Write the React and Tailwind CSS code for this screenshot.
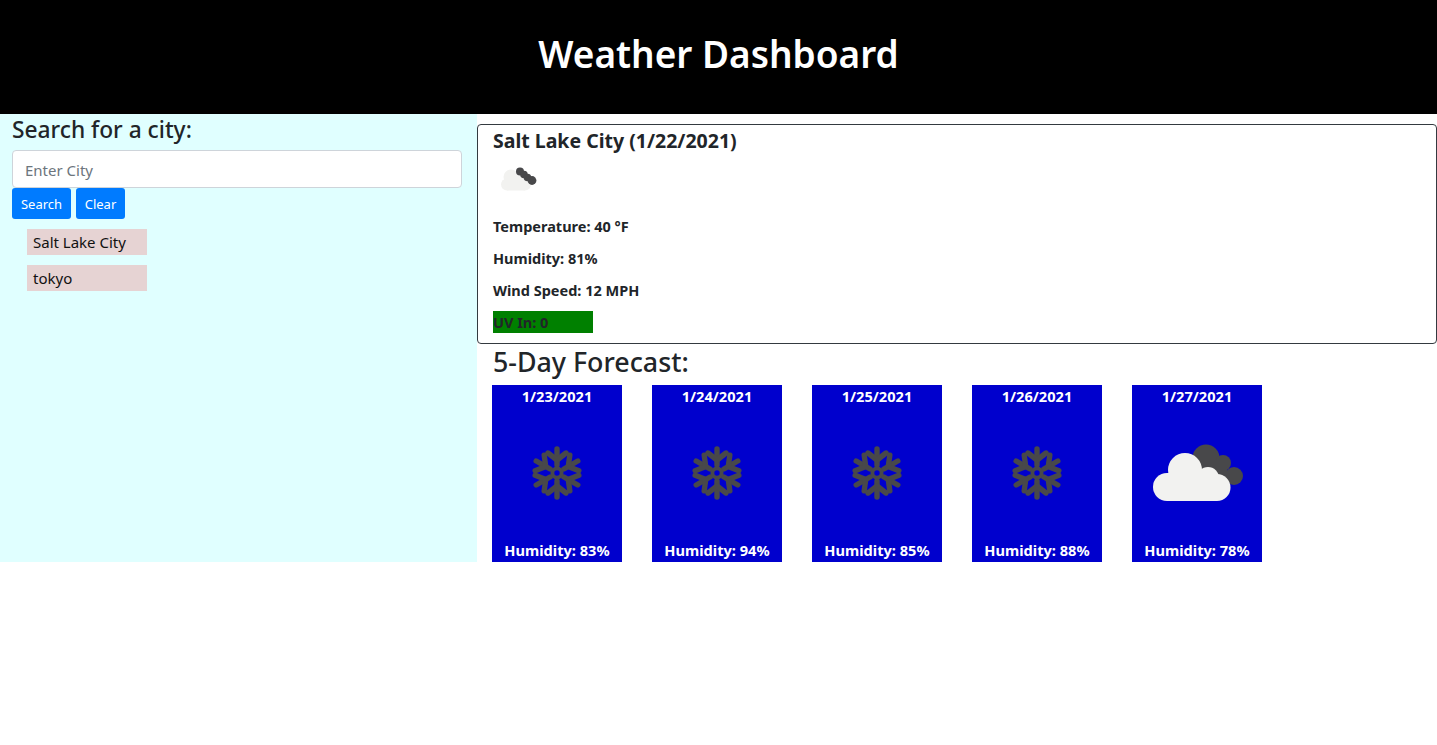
import React from "react";

const days = [
  { date: "1/23/2021", humidity: "83%", icon: "snow" },
  { date: "1/24/2021", humidity: "94%", icon: "snow" },
  { date: "1/25/2021", humidity: "85%", icon: "snow" },
  { date: "1/26/2021", humidity: "88%", icon: "snow" },
  { date: "1/27/2021", humidity: "78%", icon: "clouds" },
];

function SnowIcon() {
  return (
    <svg viewBox="0 0 100 100" className="w-[100px] h-[100px]" fill="none" stroke="#48484a" strokeWidth="5.4" strokeLinecap="round" strokeLinejoin="round">
      {[0, 60, 120, 180, 240, 300].map((deg) => (
        <g key={deg} transform={`rotate(${deg} 50 50)`}>
          <path d="M50 42V26" />
          <path d="M41 30l9 7 9-7" />
        </g>
      ))}
      <circle cx="50" cy="50" r="4.6" strokeWidth="3.8" />
    </svg>
  );
}

function CloudsIcon() {
  return (
    <svg viewBox="0 0 100 100" className="w-[100px] h-[100px]">
      <g fill="#48484a">
        <circle cx="59" cy="35" r="13.5" />
        <circle cx="76" cy="40" r="8" />
        <circle cx="87" cy="53" r="9" />
        <rect x="60" y="38" width="20" height="24" />
      </g>
      <g fill="#f2f2f0">
        <circle cx="38" cy="47" r="17" />
        <circle cx="61" cy="55" r="11" />
        <circle cx="70" cy="64.5" r="13.5" />
        <circle cx="20" cy="64" r="14" />
        <rect x="20" y="50" width="50" height="28" />
      </g>
    </svg>
  );
}

function SmallIcon() {
  return (
    <svg viewBox="0 0 50 50" className="w-[50px] h-[50px]">
      <g fill="#f2f2f0">
        <circle cx="18" cy="22" r="7.5" />
        <circle cx="28" cy="25" r="5" />
        <circle cx="32" cy="29.5" r="6" />
        <circle cx="14" cy="29.5" r="6" />
        <rect x="14" y="24" width="18" height="11.5" />
      </g>
      <g fill="#48484a">
        <circle cx="27" cy="16.5" r="4" />
        <circle cx="31" cy="19.5" r="3.8" />
        <circle cx="34.5" cy="22.5" r="3.8" />
        <circle cx="39" cy="25.5" r="4.4" />
      </g>
    </svg>
  );
}

export default function App() {
  return (
    <div className="font-['Noto_Sans',sans-serif] text-[#212529]">
      <header className="h-[114px] bg-black flex items-center justify-center pb-[6px]">
        <h1 className="text-[37px] font-semibold text-white leading-[1.2]">Weather Dashboard</h1>
      </header>

      <main className="flex h-[448px]">
        {/* Search column */}
        <aside className="w-[477px] shrink-0 bg-[#e0ffff] px-3">
          <h4 className="text-[22.75px] font-medium leading-[1.2] mt-[2px] mb-[6.7px]">Search for a city:</h4>
          <input
            placeholder="Enter City"
            className="block w-[450px] h-[38px] px-3 pt-[2px] bg-white border border-[#ced4da] rounded text-[15px] placeholder:text-[#6c757d]"
          />
          <div className="flex gap-[5px]">
            <button className="h-[31px] w-[59px] pt-[2px] bg-[#007bff] text-white text-[13px] rounded-[3px]">Search</button>
            <button className="h-[31px] w-[49px] pt-[2px] bg-[#007bff] text-white text-[13px] rounded-[3px]">Clear</button>
          </div>
          <ul className="ml-[15px] mt-[10px] flex flex-col gap-[10px]">
            <li className="w-[120px] h-[26px] bg-[#e6d3d3] px-[6px] text-[15px] leading-[26px] text-[#111]">Salt Lake City</li>
            <li className="w-[120px] h-[26px] bg-[#e6d3d3] px-[6px] text-[15px] leading-[26px] text-[#111]">tokyo</li>
          </ul>
        </aside>

        {/* Weather column */}
        <section className="flex-1 min-w-0 pt-[10px]">
          <div className="h-[220px] border border-[#343a40] rounded pl-[15px]">
            <h5 className="text-[19.5px] font-bold leading-[1.2] mt-[4px]">Salt Lake City (1/22/2021)</h5>
            <div className="h-[50px] mt-[3px]">
              <SmallIcon />
            </div>
            <div className="mt-[9px] flex flex-col gap-[8px] text-[14.5px] font-bold leading-[24px]">
              <p>Temperature: 40 °F</p>
              <p>Humidity: 81%</p>
              <p>Wind Speed: 12 MPH</p>
              <p className="w-[100px] h-[22px] mt-[1px] bg-[#008000] leading-[22px]">UV In: 0</p>
            </div>
          </div>
          <h3 className="text-[26.8px] font-medium leading-[1.2] ml-[16px] mt-[2px]">5-Day Forecast:</h3>
          <div className="flex gap-[30px] ml-[15px] mt-[7px]">
            {days.map((d) => (
              <div key={d.date} className="w-[130px] h-[177px] bg-[#0000cd] text-white text-[14.6px] font-bold flex flex-col items-center leading-[24px]">
                <div className="leading-[22px]">{d.date}</div>
                <div className="flex-1 flex items-center justify-center">
                  {d.icon === "snow" ? <SnowIcon /> : <CloudsIcon />}
                </div>
                <div>Humidity: {d.humidity}</div>
              </div>
            ))}
          </div>
        </section>
      </main>
    </div>
  );
}
